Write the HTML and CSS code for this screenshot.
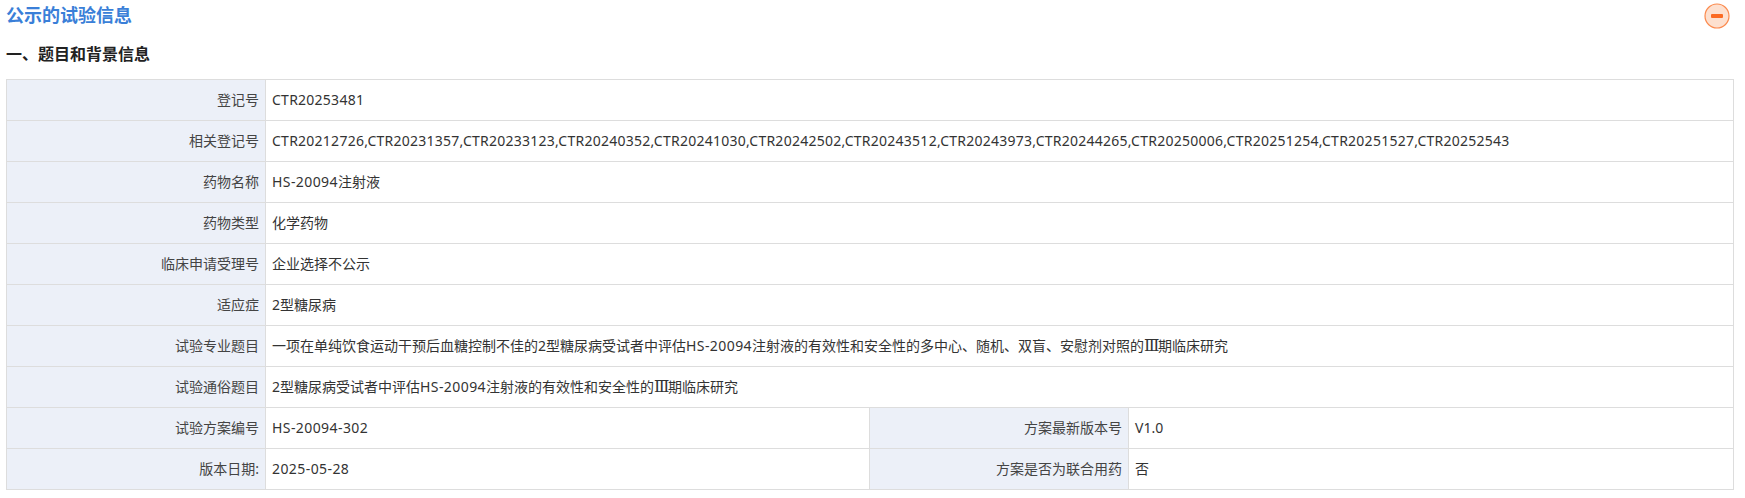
FILE: index.html
```html
<!DOCTYPE html>
<html lang="zh-CN">
<head>
<meta charset="utf-8">
<title>公示的试验信息</title>
<link rel="stylesheet" href="styles.css">
</head>
<body>
<div class="head">
  <h2 class="title">公示的试验信息</h2>
  <svg class="toggle" width="26" height="26" viewBox="0 0 26 26"><circle cx="13" cy="13" r="12" fill="#fde0cf" stroke="#fb8a4e" stroke-width="1.2"/><rect x="7" y="11" width="12" height="4" rx="1" fill="#fb6a22"/></svg>
</div>
<h3 class="sub">一、题目和背景信息</h3>
<table class="info">
  <colgroup><col class="c1"><col class="c2"><col class="c3"><col></colgroup>
  <tr><th>登记号</th><td colspan="3" class="num">CTR20253481</td></tr>
  <tr><th>相关登记号</th><td colspan="3" class="num">CTR20212726,CTR20231357,CTR20233123,CTR20240352,CTR20241030,CTR20242502,CTR20243512,CTR20243973,CTR20244265,CTR20250006,CTR20251254,CTR20251527,CTR20252543</td></tr>
  <tr><th>药物名称</th><td colspan="3"><span class="lat">HS-20094</span>注射液</td></tr>
  <tr><th>药物类型</th><td colspan="3">化学药物</td></tr>
  <tr><th>临床申请受理号</th><td colspan="3">企业选择不公示</td></tr>
  <tr><th>适应症</th><td colspan="3">2型糖尿病</td></tr>
  <tr><th>试验专业题目</th><td colspan="3">一项在单纯饮食运动干预后血糖控制不佳的2型糖尿病受试者中评估<span class="lat">HS-20094</span>注射液的有效性和安全性的多中心、随机、双盲、安慰剂对照的<span class="roman">Ⅲ</span>期临床研究</td></tr>
  <tr><th>试验通俗题目</th><td colspan="3">2型糖尿病受试者中评估<span class="lat">HS-20094</span>注射液的有效性和安全性的<span class="roman">Ⅲ</span>期临床研究</td></tr>
  <tr><th>试验方案编号</th><td class="lat">HS-20094-302</td><th>方案最新版本号</th><td>V1.0</td></tr>
  <tr><th>版本日期:</th><td class="lat">2025-05-28</td><th>方案是否为联合用药</th><td>否</td></tr>
</table>
</body>
</html>
```

FILE: styles.css
```css
* { box-sizing: border-box; }
html, body { margin: 0; background: #fff; }
body {
  padding: 0 11px 0 6px;
  font-family: "Noto Sans", "Noto Sans CJK SC", sans-serif;
  font-size: 14px;
  color: #333;
}
.head {
  display: flex;
  justify-content: space-between;
  align-items: center;
  height: 30px;
  padding-right: 4px;
}
.title {
  margin: 0;
  font-size: 18px;
  line-height: 30px;
  font-weight: 700;
  color: #3a7fd8;
}
.toggle { display: block; margin-top: 2px; }
.sub {
  margin: 0;
  height: 49px;
  padding-top: 12px;
  font-size: 16px;
  line-height: 24px;
  font-weight: 700;
  color: #222;
}
.info {
  width: 1728px;
  table-layout: fixed;
  border-collapse: collapse;
  border: 1px solid #ddd;
}
.c1 { width: 259px; }
.c2 { width: 604px; }
.c3 { width: 259px; }
.info tr { height: 41px; }
.info th, .info td {
  border: 1px solid #ddd;
  padding: 0 6px;
  font-size: 14px;
  line-height: 20px;
  font-weight: 400;
}
.info th {
  background: #ecf0f8;
  text-align: right;
  color: #444;
}
.info td { text-align: left; color: #333; }
.info .num { letter-spacing: .25px; }
.info .lat { letter-spacing: .42px; }
.roman {
  display: inline-block;
  width: 14px;
  text-align: center;
  font-family: "DejaVu Serif", serif;
  font-size: 16px;
  line-height: 14px;
}
```
